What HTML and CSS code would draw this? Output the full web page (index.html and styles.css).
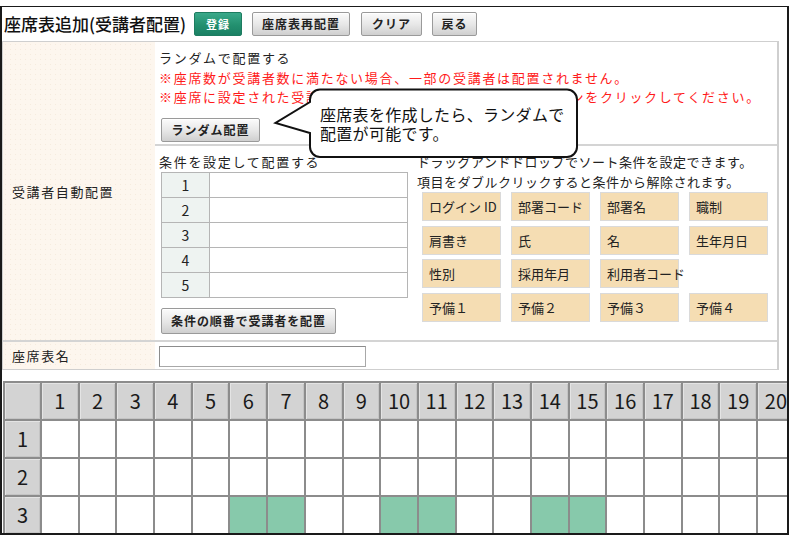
FILE: index.html
```html
<!DOCTYPE html>
<html lang="ja">
<head>
<meta charset="utf-8">
<title>座席表追加(受講者配置)</title>
<link rel="stylesheet" href="styles.css">
</head>
<body>
<div class="frame">
  <div class="titlebar">
    <h1 class="title">座席表追加(受講者配置)</h1>
    <button class="btn btn-green btn-reg">登録</button>
    <button class="btn btn-rearrange">座席表再配置</button>
    <button class="btn btn-clear">クリア</button>
    <button class="btn btn-back">戻る</button>
  </div>

  <div class="form">
    <div class="label label-auto">受講者自動配置</div>
    <div class="cell-auto">
      <div class="random">
        <p class="line">ランダムで配置する</p>
        <p class="line red">※座席数が受講者数に満たない場合、一部の受講者は配置されません。</p>
        <p class="line red">※座席に設定された受講者を解除する場合は座席表再配置ボタンをクリックしてください。</p>
        <button class="btn btn-random">ランダム配置</button>
      </div>
      <div class="cond">
        <div class="cond-left">
          <p class="line">条件を設定して配置する</p>
          <div class="cond-table">
            <div class="num">1</div><div class="slot"></div>
            <div class="num">2</div><div class="slot"></div>
            <div class="num">3</div><div class="slot"></div>
            <div class="num">4</div><div class="slot"></div>
            <div class="num">5</div><div class="slot"></div>
          </div>
          <button class="btn btn-cond">条件の順番で受講者を配置</button>
        </div>
        <div class="cond-right">
          <p class="hint">ドラッグアンドドロップでソート条件を設定できます。</p>
          <p class="hint">項目をダブルクリックすると条件から解除されます。</p>
          <div class="chips">
            <div class="chip">ログイン ID</div>
            <div class="chip">部署コード</div>
            <div class="chip">部署名</div>
            <div class="chip">職制</div>
            <div class="chip">肩書き</div>
            <div class="chip">氏</div>
            <div class="chip">名</div>
            <div class="chip">生年月日</div>
            <div class="chip">性別</div>
            <div class="chip">採用年月</div>
            <div class="chip">利用者コード</div>
            <div class="chip-empty"></div>
            <div class="chip">予備１</div>
            <div class="chip">予備２</div>
            <div class="chip">予備３</div>
            <div class="chip">予備４</div>
          </div>
        </div>
      </div>
    </div>
    <div class="label label-name">座席表名</div>
    <div class="cell-name"><input class="name-input" type="text"></div>
  </div>

  <div class="seats">
    <div class="hd corner"></div>
    <div class="hd">1</div><div class="hd">2</div><div class="hd">3</div><div class="hd">4</div><div class="hd">5</div>
    <div class="hd">6</div><div class="hd">7</div><div class="hd">8</div><div class="hd">9</div><div class="hd">10</div>
    <div class="hd">11</div><div class="hd">12</div><div class="hd">13</div><div class="hd">14</div><div class="hd">15</div>
    <div class="hd">16</div><div class="hd">17</div><div class="hd">18</div><div class="hd">19</div><div class="hd">20</div>

    <div class="hd">1</div>
    <div class="s"></div><div class="s"></div><div class="s"></div><div class="s"></div><div class="s"></div>
    <div class="s"></div><div class="s"></div><div class="s"></div><div class="s"></div><div class="s"></div>
    <div class="s"></div><div class="s"></div><div class="s"></div><div class="s"></div><div class="s"></div>
    <div class="s"></div><div class="s"></div><div class="s"></div><div class="s"></div><div class="s"></div>

    <div class="hd">2</div>
    <div class="s"></div><div class="s"></div><div class="s"></div><div class="s"></div><div class="s"></div>
    <div class="s"></div><div class="s"></div><div class="s"></div><div class="s"></div><div class="s"></div>
    <div class="s"></div><div class="s"></div><div class="s"></div><div class="s"></div><div class="s"></div>
    <div class="s"></div><div class="s"></div><div class="s"></div><div class="s"></div><div class="s"></div>

    <div class="hd">3</div>
    <div class="s"></div><div class="s"></div><div class="s"></div><div class="s"></div><div class="s"></div>
    <div class="s on"></div><div class="s on"></div><div class="s"></div><div class="s"></div><div class="s on"></div>
    <div class="s on"></div><div class="s"></div><div class="s"></div><div class="s on"></div><div class="s on"></div>
    <div class="s"></div><div class="s"></div><div class="s"></div><div class="s"></div><div class="s"></div>
  </div>

  <div class="bubble">
    <svg class="bubble-shape" width="308" height="72" viewBox="0 0 308 72" aria-hidden="true">
      <path d="M47 1.5 H294 A10 10 0 0 1 304 11.5 V59 A10 10 0 0 1 294 69 H47 A10 10 0 0 1 37 59 V45 L2.5 35 L37 14 V11.5 A10 10 0 0 1 47 1.5 Z" fill="#fff" stroke="#111" stroke-width="2" stroke-linejoin="miter"/>
    </svg>
    <div class="bubble-text">座席表を作成したら、ランダムで<br>配置が可能です。</div>
  </div>
</div>
</body>
</html>
```

FILE: styles.css
```css
html, body {
  margin: 0;
  padding: 0;
  overflow: hidden;
  background: #fff;
}

body {
  font-family: "Noto Sans CJK JP", "Noto Sans", sans-serif;
  color: #222;
  width: 789px;
  height: 535px;
}

p { margin: 0; }

.frame {
  position: relative;
  box-sizing: border-box;
  width: 789px;
  height: 529px;
  margin-top: 6px;
  border-style: solid;
  border-color: #1a1a1a;
  border-width: 1px 2px 2px 2px;
  overflow: hidden;
  background: #fff;
}

/* ---------- title bar ---------- */
.titlebar {
  display: flex;
  align-items: center;
  height: 34px;
  padding-left: 2px;
  gap: 10px;
}

.title {
  margin: 0 -2px 0 0;
  font-size: 17px;
  font-weight: 500;
  letter-spacing: 0;
  line-height: 24px;
  color: #111;
  white-space: nowrap;
}

.btn {
  font-family: "Noto Sans CJK JP", sans-serif;
  font-size: 12px;
  font-weight: 700;
  letter-spacing: 1px;
  color: #222;
  height: 24px;
  padding: 0;
  border: 1px solid #9a9a9a;
  border-radius: 2px;
  background: linear-gradient(#fbfbfb, #e6e6e6 55%, #cfcfcf);
  box-shadow: inset 0 1px 0 #fff;
  line-height: 20px;
  cursor: pointer;
}

.btn-green {
  color: #fff;
  font-size: 11px;
  border-color: #1d7c60;
  background: linear-gradient(#3aa98a, #23906f 55%, #1b8064);
  box-shadow: none;
}

.btn-reg { width: 48px; }
.btn-rearrange { width: 98px; }
.btn-clear { width: 61px; margin-left: 1px; }
.btn-back { width: 45px; }

/* ---------- form ---------- */
.form {
  display: grid;
  grid-template-columns: 152px 1fr;
  width: 777px;
  box-sizing: border-box;
  border: 1px solid #cfcfcf;
  border-right-width: 2px;
}

.label {
  background-color: #fdf6ee;
  background-image: radial-gradient(circle, #f6ebdd 0.6px, transparent 0.9px);
  background-size: 5px 5px;
  font-size: 13px;
  letter-spacing: 1.6px;
  padding-left: 9px;
  display: flex;
  align-items: center;
  color: #222;
}

.label-name,
.cell-name {
  border-top: 2px solid #d4d4d4;
}

.line {
  font-size: 13px;
  letter-spacing: 1.7px;
  line-height: 19.5px;
  white-space: nowrap;
}

.red { color: #ff1a1a; }

.random {
  box-sizing: border-box;
  height: 104px;
  padding: 6px 0 0 4px;
  border-bottom: 2px solid #d4d4d4;
}

.btn-random {
  display: block;
  width: 99px;
  margin: 11.5px 0 0 2px;
}

.cond {
  display: flex;
  height: 194px;
  box-sizing: border-box;
  padding: 6px 0 0 4px;
}

.cond-left {
  width: 258px;
  flex: none;
}

.cond-left .line { line-height: 19px; }

.cond-table {
  display: grid;
  grid-template-columns: 47px 1fr;
  grid-auto-rows: 24px;
  width: 247px;
  box-sizing: border-box;
  margin: 1px 0 0 2px;
  border: 1px solid #b5b5b5;
  background: #b5b5b5;
  gap: 1px;
}

.num {
  background: #eef3f1;
  font-size: 14px;
  text-align: center;
  line-height: 24px;
  color: #222;
}

.slot { background: #fff; }

.btn-cond {
  display: block;
  width: 175px;
  height: 26px;
  margin: 10px 0 0 2px;
  font-size: 12px;
  letter-spacing: 0.9px;
}

.cond-right {
  flex: 1;
}

.hint {
  font-size: 13px;
  letter-spacing: 0.5px;
  line-height: 20px;
  white-space: nowrap;
  color: #222;
}

.chips {
  display: grid;
  grid-template-columns: repeat(4, 79px);
  grid-auto-rows: 29px;
  column-gap: 10px;
  row-gap: 4.5px;
  margin: 0 0 0 5px;
}

.chip {
  background: #f5ddb3;
  border: 1px solid #dadada;
  box-sizing: border-box;
  font-size: 13px;
  line-height: 27px;
  padding-left: 6px;
  white-space: nowrap;
  color: #222;
}

.cell-name {
  height: 29px;
  padding: 4px 0 0 4px;
  box-sizing: border-box;
}

.label-name {
  height: 29px;
  box-sizing: border-box;
}

.name-input {
  display: block;
  box-sizing: border-box;
  width: 207px;
  height: 21px;
  margin: 0;
  border: 1px solid #a8a8a8;
  border-top-color: #8c8c8c;
  border-left-color: #8c8c8c;
  background: #fff;
}

/* ---------- seat grid ---------- */
.seats {
  display: grid;
  grid-template-columns: 35px repeat(20, 35.7px);
  grid-auto-rows: 36px;
  gap: 2px;
  padding: 2px 0 0 2px;
  margin: 11px 0 0 1px;
  width: max-content;
  background: #8c8c8c;
}

.hd {
  background: #d3d3d3;
  box-shadow: inset 1px 1px 0 #e4e4e4, inset -1px -1px 0 #c4c4c4;
  font-size: 20px;
  line-height: 36px;
  text-align: center;
  color: #1a1a1a;
}

.s { background: #fff; }
.s.on { background: #87c9ab; }

/* ---------- speech bubble ---------- */
.bubble {
  position: absolute;
  left: 271px;
  top: 81px;
  width: 308px;
  height: 72px;
}

.bubble-shape {
  position: absolute;
  left: 0;
  top: 0;
  display: block;
}

.bubble-text {
  position: absolute;
  left: 47px;
  top: 17px;
  font-size: 16px;
  line-height: 19px;
  letter-spacing: 0.3px;
  white-space: nowrap;
  color: #111;
}
```
